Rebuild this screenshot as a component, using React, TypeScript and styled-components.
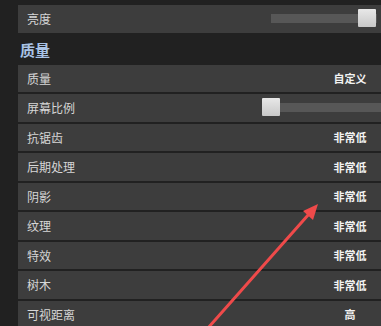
import React from "react";
import styled, { createGlobalStyle } from "styled-components";

const GlobalStyle = createGlobalStyle`
    html, body {
        margin: 0;
        padding: 0;
        background: #212121;
        overflow: hidden;
    }
    body {
        font-family: "Noto Sans CJK SC", "Noto Sans", sans-serif;
    }
`;

const Page = styled.div`
    position: relative;
    width: 381px;
    height: 326px;
    overflow: hidden;
    padding: 5px 0 0 18px;
    box-sizing: border-box;
    display: flex;
    flex-direction: column;
`;

const Row = styled.div`
    height: 27.5px;
    margin-bottom: 2px;
    width: calc(100% + 10px);
    flex-shrink: 0;
    background: #3d3d3d;
    display: flex;
    align-items: center;
    padding-left: 9px;
    box-sizing: border-box;
`;

const Label = styled.span`
    color: #d6d6d6;
    font-size: 12px;
    flex: 1;
`;

const Value = styled.span`
    width: 50px;
    margin-right: 16px;
    text-align: center;
    color: #f2f2f2;
    font-size: 11px;
    font-weight: 700;
`;

const Heading = styled.div`
    height: 30px;
    flex-shrink: 0;
    display: flex;
    align-items: center;
    padding-left: 2px;
    color: #a9c3e6;
    font-size: 15px;
    font-weight: 700;
`;

const SliderBox = styled.div<{ $width: number; $right: number }>`
    position: relative;
    width: ${(p) => p.$width}px;
    margin-right: ${(p) => p.$right}px;
    height: 19px;
    display: flex;
    align-items: center;
`;

const Track = styled.div`
    width: 100%;
    height: 9px;
    background: #575757;
`;

const Thumb = styled.div`
    position: absolute;
    top: 0;
    width: 18px;
    height: 18px;
    background: linear-gradient(#e8e8e8, #c8c8c8);
    border-radius: 1px;
`;

const Arrow = styled.svg`
    position: absolute;
    left: 0;
    top: 0;
    pointer-events: none;
`;

const Slider: React.FC<{ width: number; right: number; pos: number }> = ({ width, right, pos }) => (
    <SliderBox $width={width} $right={right}>
        <Track />
        <Thumb style={{ left: `${pos}px` }} />
    </SliderBox>
);

const rows: [string, string][] = [
    ["抗锯齿", "非常低"],
    ["后期处理", "非常低"],
    ["阴影", "非常低"],
    ["纹理", "非常低"],
    ["特效", "非常低"],
    ["树木", "非常低"],
    ["可视距离", "高"],
];

export default function App() {
    return (
        <>
            <GlobalStyle />
            <Page>
                <Row>
                    <Label>亮度</Label>
                    <Slider width={106} right={14} pos={87} />
                </Row>
                <Heading>质量</Heading>
                <Row>
                    <Label>质量</Label>
                    <Value>自定义</Value>
                </Row>
                <Row>
                    <Label>屏幕比例</Label>
                    <Slider width={129} right={0} pos={0} />
                </Row>
                {rows.map(([label, value]) => (
                    <Row key={label}>
                        <Label>{label}</Label>
                        <Value>{value}</Value>
                    </Row>
                ))}
                <Arrow width="381" height="326" viewBox="0 0 381 326">
                    <line x1="208" y1="328" x2="309" y2="214" stroke="#ef4a4a" strokeWidth="3" strokeLinecap="round" />
                    <polygon points="318,204 303,211 313,220" fill="#ef4a4a" />
                </Arrow>
            </Page>
        </>
    );
}
